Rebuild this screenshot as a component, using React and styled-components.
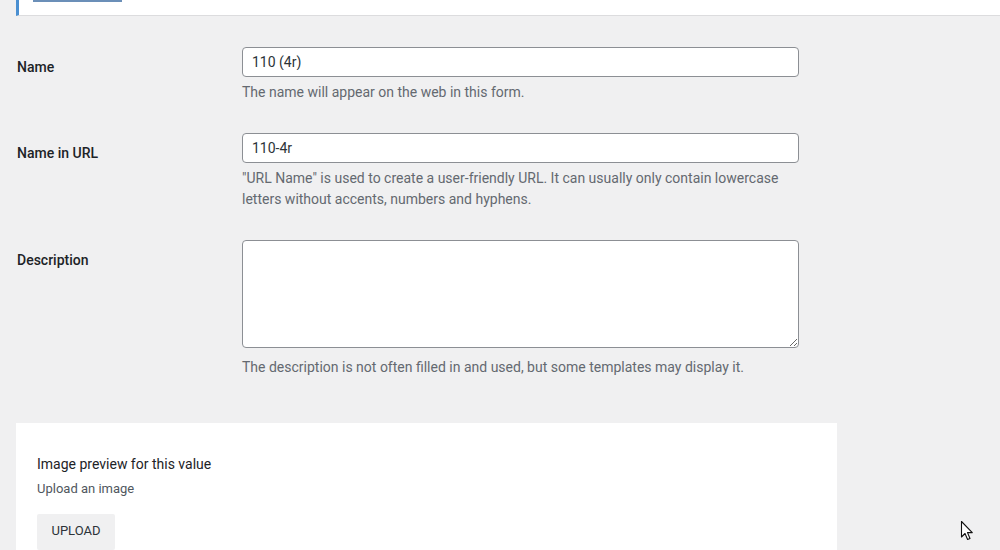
import React from "react";
import styled, { createGlobalStyle } from "styled-components";

const GlobalStyle = createGlobalStyle`
  html, body {
    margin: 0;
    padding: 0;
    background: #f0f0f1;
    font-family: Roboto, "Noto Sans", "Liberation Sans", sans-serif;
    color: #1d2327;
    font-size: 14px;
  }
`;

const Page = styled.div`
  position: relative;
  width: 1000px;
  height: 550px;
  overflow: hidden;
`;

const Notice = styled.div`
  height: 15px;
  margin-left: 16px;
  padding-left: 14px;
  background: #fff;
  border-left: 3px solid #4a8fd1;
  border-bottom: 1px solid #dcdcde;
`;

const NoticeLink = styled.div`
  width: 89px;
  height: 2px;
  background: #6b8fb8;
`;

const Form = styled.div`
  padding: 16px 0 0 17px;
  width: 800px;
`;

const Row = styled.div`
  display: grid;
  grid-template-columns: 225px 557px;
  padding: 15px 0;
`;

const Label = styled.div`
  padding-top: 10px;
  line-height: 20px;
  font-weight: 500;
  font-size: 14px;
  color: #1d2327;
`;

const Field = styled.div`
  display: flex;
  flex-direction: column;
`;

const Input = styled.input`
  box-sizing: border-box;
  width: 557px;
  height: 30px;
  padding: 0 9px;
  border: 1px solid #8c8f94;
  border-radius: 4px;
  background: #fff;
  font: inherit;
  font-size: 14px;
  color: #2c3338;
  outline: none;
`;

const TextArea = styled.textarea`
  box-sizing: border-box;
  width: 557px;
  height: 108px;
  padding: 6px 9px;
  border: 1px solid #8c8f94;
  border-radius: 4px;
  background: #fff;
  font: inherit;
  resize: vertical;
  outline: none;
  display: block;
`;

const Hint = styled.p`
  margin: ${(p) => (p.$wide ? "9px" : "5px")} 0 0;
  line-height: 21px;
  font-size: 14px;
  color: #646970;
  max-width: 545px;
`;

const Card = styled.div`
  margin: 30px 0 0 16px;
  width: 821px;
  background: #fff;
  padding: 31px 21px 0;
  box-sizing: border-box;
  height: 140px;
`;

const CardTitle = styled.div`
  font-size: 14px;
  line-height: 20px;
  color: #1d2327;
`;

const CardSub = styled.div`
  margin-top: 5px;
  font-size: 13px;
  line-height: 20px;
  color: #50575e;
`;

const UploadButton = styled.button`
  margin-top: 15px;
  width: 78px;
  height: 36px;
  padding: 0 0 3px;
  border: none;
  border-radius: 2px;
  background: #f0f0f1;
  font: inherit;
  font-size: 13px;
  text-transform: uppercase;
  color: #2c3338;
`;

const Cursor = styled.svg`
  position: absolute;
  left: 960px;
  top: 520px;
`;

export default function App() {
  return (
    <Page>
      <GlobalStyle />
      <Notice>
        <NoticeLink />
      </Notice>
      <Form>
        <Row>
          <Label>Name</Label>
          <Field>
            <Input defaultValue="110 (4r)" />
            <Hint>The name will appear on the web in this form.</Hint>
          </Field>
        </Row>
        <Row>
          <Label>Name in URL</Label>
          <Field>
            <Input defaultValue="110-4r" />
            <Hint>
              "URL Name" is used to create a user-friendly URL. It can usually
              only contain lowercase letters without accents, numbers and
              hyphens.
            </Hint>
          </Field>
        </Row>
        <Row>
          <Label>Description</Label>
          <Field>
            <TextArea />
            <Hint $wide>
              The description is not often filled in and used, but some
              templates may display it.
            </Hint>
          </Field>
        </Row>
      </Form>
      <Card>
        <CardTitle>Image preview for this value</CardTitle>
        <CardSub>Upload an image</CardSub>
        <UploadButton>Upload</UploadButton>
      </Card>
      <Cursor width="14" height="22" viewBox="0 0 14 22">
        <path
          d="M1.5 1.5 L1.5 17 L5 13.5 L7.6 19.5 L10 18.5 L7.5 12.6 L12.3 12.6 Z"
          fill="#fff"
          stroke="#111"
          strokeWidth="1.1"
          strokeLinejoin="round"
        />
      </Cursor>
    </Page>
  );
}
